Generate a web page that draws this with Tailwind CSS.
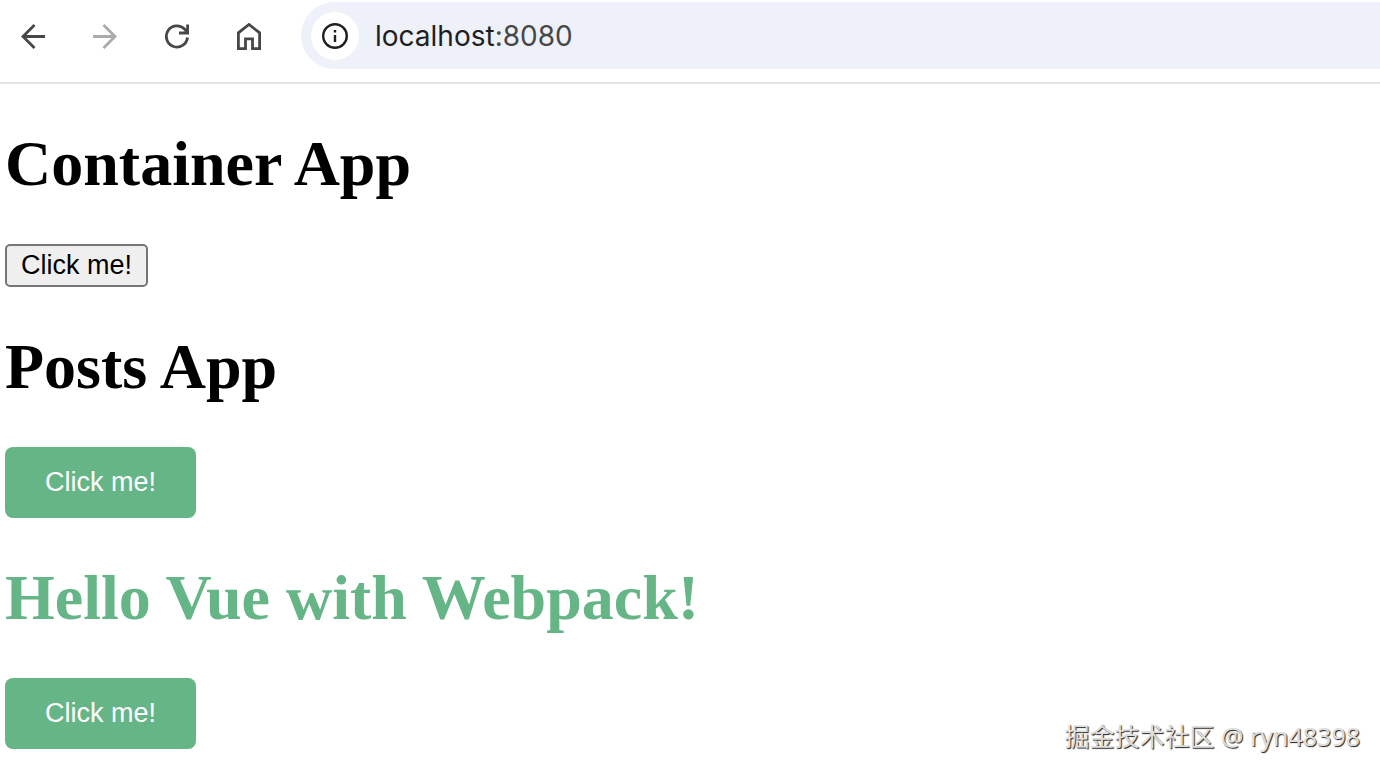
<!DOCTYPE html>
<html lang="en">
<head>
  <meta charset="UTF-8" />
  <meta name="viewport" content="width=device-width, initial-scale=1.0" />
  <title>Container App</title>
  <script src="https://cdn.jsdelivr.net/npm/@tailwindcss/browser@4"></script>
</head>
<body class="min-h-screen bg-white text-black">
    <!-- browser toolbar -->
    <header class="flex items-start pt-[2px] pb-[13px] border-b-2 border-[#e3e3e3]">
        <nav class="flex items-center gap-6 h-[67px] pl-[9px] text-[#474747]">
            <button aria-label="Back" title="Back" class="size-12 flex items-center justify-center hover:cursor-pointer">
                <svg xmlns="http://www.w3.org/2000/svg" fill="none" viewBox="0 0 32 32" stroke-width="2.8" stroke="currentColor" class="size-8">
                <path d="M28 16.500H6M17.500 5 6 16.500 17.500 28" />
                </svg>
            </button>
            <button aria-label="Forward" title="Forward" disabled class="size-12 flex items-center justify-center text-[#ababab]">
                <svg xmlns="http://www.w3.org/2000/svg" fill="none" viewBox="0 0 32 32" stroke-width="2.8" stroke="currentColor" class="size-8">
                <path d="M4 16.500H26M14.500 5 26 16.500 14.500 28" />
                </svg>
            </button>
            <button aria-label="Reload" title="Reload" class="size-12 flex items-center justify-center hover:cursor-pointer">
                <svg xmlns="http://www.w3.org/2000/svg" fill="none" viewBox="0 0 32 32" stroke-width="2.8" stroke="currentColor" class="size-8">
                <path d="M26.500 17.500A10.600 10.600 0 1 1 23.500 9L26 11.800M26.600 4.500V13H18" />
                </svg>
            </button>
            <button aria-label="Home" title="Home" class="size-12 flex items-center justify-center hover:cursor-pointer">
                <svg xmlns="http://www.w3.org/2000/svg" fill="none" viewBox="0 0 32 32" stroke-width="2.8" stroke="currentColor" class="size-8">
                <path d="M5.400 28.600V12.800L16 4.500 26.600 12.800V28.600H19.500V18.800H12.500V28.600Z" />
                </svg>
            </button>
        </nav>
        <div class="flex flex-1 items-center gap-4 h-[67px] ml-7 pl-[10px] bg-[#eef1fa] rounded-l-full">
            <button aria-label="View site information" title="View site information" class="size-12 flex items-center justify-center rounded-full bg-white text-[#1f1f1f] hover:cursor-pointer">
                <svg xmlns="http://www.w3.org/2000/svg" fill="none" viewBox="0 0 32 32" stroke-width="2.4" stroke="currentColor" class="size-8">
                <circle cx="16" cy="16" r="11.800" />
                <path d="M16 15V22M16 10V12.400" />
                </svg>
            </button>
            <span class="font-['Inter',sans-serif] text-[28px] leading-9 text-[#1f1f1f]">localhost<span class="text-[#474747]">:8080</span></span>
        </div>
    </header>

    <main class="px-[5px] font-['Liberation_Serif',serif]">
        <section>
            <h1 class="my-[43px] text-[64px] leading-[74px] font-bold">Container App</h1>
            <button class="block px-[14px] py-1 border-2 border-[#767676] rounded-[5px] bg-[#efefef] font-['Liberation_Sans',sans-serif] text-[27px] leading-[31px] hover:bg-[#e5e5e5]">Click me!</button>
        </section>
        <section>
            <h1 class="my-[43px] text-[64px] leading-[74px] font-bold">Posts App</h1>
            <button class="block px-10 py-5 rounded-lg bg-[#65b587] text-white font-['Liberation_Sans',sans-serif] text-[27px] leading-[31px] hover:cursor-pointer">Click me!</button>
        </section>
        <section>
            <h1 class="my-[43px] text-[64px] leading-[74px] font-bold text-[#65b587]">Hello Vue with Webpack!</h1>
            <button class="block px-10 py-5 rounded-lg bg-[#65b587] text-white font-['Liberation_Sans',sans-serif] text-[27px] leading-[31px] hover:cursor-pointer">Click me!</button>
        </section>
    </main>

    <!-- watermark -->
    <p class="absolute right-5 bottom-5 font-['Noto_Sans','Noto_Sans_CJK_SC',sans-serif] text-[25px] leading-8 text-[#dedede] [text-shadow:1px_1px_1px_#222]">掘金技术社区 @ ryn48398</p>
</body>
</html>
